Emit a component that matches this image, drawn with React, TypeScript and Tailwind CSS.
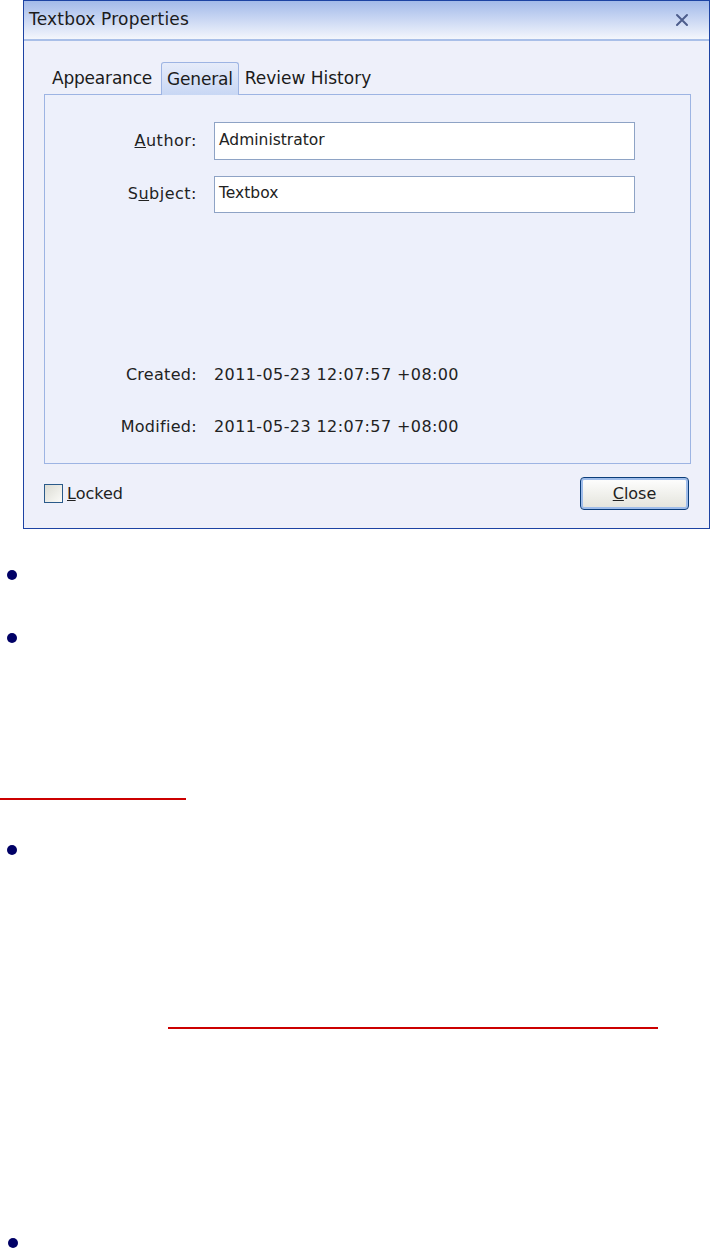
import React from "react";

function Bullet() {
  return <span className="block w-[10px] h-[10px] rounded-full bg-[#000066]" />;
}

export default function App() {
  return (
    <div className="w-[711px] h-[1253px] bg-white overflow-hidden" style={{ fontFamily: '"DejaVu Sans", Tahoma, sans-serif' }}>
      {/* dialog */}
      <div className="ml-[23px] w-[687px] h-[529px] border border-[#1d43a3] flex flex-col bg-[#eef0fa]">
        <div className="h-[40px] border-b-2 border-[#a9bfe8] bg-gradient-to-b from-[#a3bae9] to-[#f4f6fc] flex items-center justify-between pl-[5px] pr-[20px] shrink-0">
          <span className="text-[17px] text-[#1b1b1b] tracking-[0.2px]">Textbox Properties</span>
          <svg width="14" height="14" viewBox="0 0 14 14">
            <path d="M2 2 L12 12 M12 2 L2 12" stroke="#4d5d8c" strokeWidth="2" strokeLinecap="round" />
          </svg>
        </div>

        <div className="flex-1 flex flex-col px-[20px] pt-[21px]">
          {/* tabs */}
          <div className="flex items-end h-[32px] text-[17px] text-[#1b1b1b]">
            <span className="pl-[8px] pr-[9px] pb-[3px] tracking-[-0.2px]">Appearance</span>
            <span className="h-[33px] px-[5px] pt-[2px] flex items-center border border-b-0 border-[#9db4e3] rounded-t-[3px] bg-gradient-to-b from-[#e6ecfa] to-[#c8d7f4] relative z-10 -mb-px tracking-[-0.2px]">General</span>
            <span className="pl-[6px] pb-[3px] tracking-[0px]">Review History</span>
          </div>

          {/* panel */}
          <div className="w-[647px] h-[370px] border border-[#9db4e3] bg-[#edf0fb] flex flex-col text-[16px] text-[#222]">
            <div className="flex items-center mt-[27px] h-[38px]">
              <span className="w-[152px] text-right tracking-[0.5px]"><u>A</u>uthor:</span>
              <div className="ml-[17px] w-[421px] h-[38px] border border-[#8ea3c5] bg-white flex items-center pl-[4px] text-[15.5px]">Administrator</div>
            </div>
            <div className="flex items-center mt-[15px] h-[38px]">
              <span className="w-[152px] text-right tracking-[0.5px]">S<u>u</u>bject:</span>
              <div className="ml-[17px] w-[421px] h-[37px] border border-[#8ea3c5] bg-white flex items-center pl-[4px] text-[15.5px]">Textbox</div>
            </div>
            <div className="flex items-center mt-[152px] h-[20px]">
              <span className="w-[152px] text-right tracking-[0.3px]">Created:</span>
              <span className="ml-[17px] tracking-[0.4px]">2011-05-23 12:07:57 +08:00</span>
            </div>
            <div className="flex items-center mt-[32px] h-[20px]">
              <span className="w-[152px] text-right tracking-[0.3px]">Modified:</span>
              <span className="ml-[17px] tracking-[0.4px]">2011-05-23 12:07:57 +08:00</span>
            </div>
          </div>

          {/* footer */}
          <div className="flex items-center justify-between mt-[13px] text-[16px] text-[#222]">
            <div className="flex items-center gap-[4px]">
              <span className="block w-[19px] h-[19px] border border-[#2a5a8a] bg-gradient-to-br from-[#dcdcd4] to-[#fbfbf8]" />
              <span><u>L</u>ocked</span>
            </div>
            <div className="w-[109px] h-[33px] rounded-[4px] border border-[#0b3d7a] bg-gradient-to-b from-[#ffffff] to-[#e3e3db] flex items-center justify-center shadow-[inset_0_0_0_2px_#9ebcea]">
              <span><u>C</u>lose</span>
            </div>
          </div>
        </div>
      </div>

      {/* page below */}
      <div>
        <div className="pl-[7px] pt-[41px]"><Bullet /></div>
        <div className="pl-[7px] pt-[53px]"><Bullet /></div>
        <div className="mt-[155px] w-[186px] h-[2px] bg-[#cc0000]" />
        <div className="pl-[7px] pt-[45px]"><Bullet /></div>
        <div className="mt-[172px] ml-[168px] w-[490px] h-[2px] bg-[#cc0000]" />
        <div className="pl-[8px] pt-[209px]"><Bullet /></div>
      </div>
    </div>
  );
}
